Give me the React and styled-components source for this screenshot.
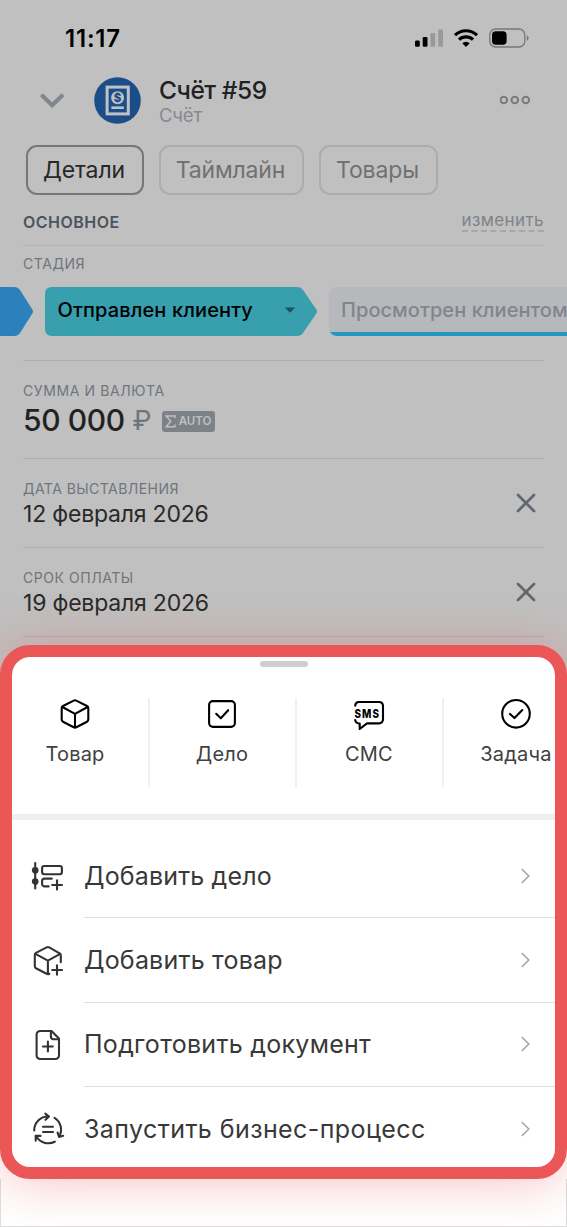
import styled, { createGlobalStyle } from "styled-components";

const App = () => {
    return (
        <Page>
            <GlobalStyle />
            <StatusBar>
                <Time>11:17</Time>
                <StatusIcons>
                    <SignalIcon />
                    <WifiIcon />
                    <BatteryIcon />
                </StatusIcons>
            </StatusBar>
            <Header>
                <ChevronDown />
                <InvoiceIcon />
                <Titles>
                    <Title>Счёт #59</Title>
                    <Subtitle>Счёт</Subtitle>
                </Titles>
                <DotsIcon />
            </Header>
            <Tabs>
                <Tab $width={118} $active>Детали</Tab>
                <Tab $width={145}>Таймлайн</Tab>
                <Tab $width={119}>Товары</Tab>
            </Tabs>
            <SectionHead>
                <SectionTitle>ОСНОВНОЕ</SectionTitle>
                <EditLink>изменить</EditLink>
            </SectionHead>
            <StageField>
                <Label $spacing={0.55}>СТАДИЯ</Label>
                <Stages>
                    <PreviousStage />
                    <CurrentStage>
                        Отправлен клиенту
                        <Caret />
                    </CurrentStage>
                    <NextStage>Просмотрен клиентом</NextStage>
                </Stages>
            </StageField>
            <Field $height={98}>
                <div>
                    <Label $spacing={0.6}>СУММА И ВАЛЮТА</Label>
                    <Money>
                        <Amount>50 000</Amount>
                        <Currency>₽</Currency>
                        <AutoBadge>
                            <Sigma />
                            AUTO
                        </AutoBadge>
                    </Money>
                </div>
            </Field>
            <Field $height={89}>
                <div>
                    <Label $spacing={0.45}>ДАТА ВЫСТАВЛЕНИЯ</Label>
                    <Value>12 февраля 2026</Value>
                </div>
                <CloseIcon />
            </Field>
            <Field $height={89}>
                <div>
                    <Label $spacing={0.55}>СРОК ОПЛАТЫ</Label>
                    <Value>19 февраля 2026</Value>
                </div>
                <CloseIcon />
            </Field>
            <LastLine />
            <Sheet>
                <Handle />
                <QuickActions>
                    <QuickAction><BoxIcon />Товар</QuickAction>
                    <QuickAction><CheckSquareIcon />Дело</QuickAction>
                    <QuickAction><SmsIcon />СМС</QuickAction>
                    <QuickAction><CheckCircleIcon />Задача</QuickAction>
                </QuickActions>
                <Menu>
                    <MenuItem icon={<TimelineIcon />} text="Добавить дело" spacing={0.15} />
                    <MenuItem icon={<BoxPlusIcon />} text="Добавить товар" spacing={0.2} />
                    <MenuItem icon={<FilePlusIcon />} text="Подготовить документ" spacing={0.28} />
                    <MenuItem icon={<ProcessIcon />} text="Запустить бизнес-процесс" spacing={0.42} />
                </Menu>
            </Sheet>
            <Footer />
        </Page>
    );
};

const MenuItem = ({ icon, text, spacing }) => (
    <MenuRow>
        <MenuIcon>{icon}</MenuIcon>
        <MenuText $spacing={spacing}>
            {text}
            <ChevronRight />
        </MenuText>
    </MenuRow>
);

/* ---- status bar and header icons ---- */

const SignalIcon = () => (
    <svg width="28" height="18" viewBox="0 0 28 18">
        <rect x="0" y="11.5" width="4.8" height="6.2" rx="1.3" />
        <rect x="7.7" y="8" width="4.8" height="9.7" rx="1.3" />
        <rect x="15.4" y="4" width="4.8" height="13.7" rx="1.3" fill="#999" />
        <rect x="23.2" y="0.4" width="4.8" height="17.3" rx="1.3" fill="#999" />
    </svg>
);

const WifiIcon = () => (
    <svg width="24" height="18" viewBox="0 0 24 18" fill="none" stroke="#000" strokeWidth="3.2">
        <path d="M1 6.2a15.8 15.8 0 0 1 22 0" />
        <path d="M5 10.7a10.1 10.1 0 0 1 14 0" />
        <path d="M12 17.9 8.3 14.3a5.3 5.3 0 0 1 7.4 0Z" fill="#000" stroke="none" />
    </svg>
);

const BatteryIcon = () => (
    <svg width="41" height="20" viewBox="0 0 41 20" fill="none">
        <rect x="0.8" y="1" width="35" height="18" rx="5.7" stroke="#777" strokeWidth="1.3" />
        <rect x="3" y="3.2" width="14.6" height="13.6" rx="3.7" fill="#000" />
        <path d="M37.8 7.2c2.4.9 2.4 4.7 0 5.6Z" fill="#777" />
    </svg>
);

const ChevronDown = () => (
    <svg width="26" height="16" viewBox="0 0 26 16" fill="none" stroke="#81858d" strokeWidth="4">
        <path d="m2.300 2.800 10.900 10.500L24 2.800" />
    </svg>
);

const InvoiceIcon = () => (
    <InvoiceSvg width="47" height="47" viewBox="0 0 47 47">
        <circle cx="23.5" cy="23.5" r="23.3" fill="#1b4e89" />
        <rect x="13.1" y="10.1" width="21.2" height="26.8" stroke="#bfc1c5" strokeWidth="3" fill="none" />
        <circle cx="23.6" cy="20.7" r="6.5" fill="#bfc1c5" />
        <text x="23.6" y="24.8" textAnchor="middle" fontSize="11.5" fontWeight="800" fill="#1b4e89">$</text>
        <path d="M17.4 30.7h12.4" stroke="#bfc1c5" strokeWidth="2.6" />
    </InvoiceSvg>
);

const DotsIcon = () => (
    <svg width="31" height="10" viewBox="0 0 31 10" fill="none" stroke="#777a7e" strokeWidth="2">
        <circle cx="3.8" cy="5" r="3.3" />
        <circle cx="14.8" cy="5" r="3.3" />
        <circle cx="25.8" cy="5" r="3.3" />
    </svg>
);

const Caret = () => (
    <svg width="12" height="6" viewBox="0 0 12 6">
        <path d="M.8.4h10.4L6 5.8Z" fill="#19525b" />
    </svg>
);

const Sigma = () => (
    <svg width="11" height="13" viewBox="0 0 11 13" fill="none" stroke="#bfc0c2" strokeWidth="1.4">
        <path d="M10 3.3V1H1.2l4.6 5.3-4.6 5.4H10V9.4" />
    </svg>
);

const CloseIcon = () => (
    <svg width="20" height="20" viewBox="0 0 20 20" stroke="#62676f" strokeWidth="2.8" strokeLinecap="round">
        <path d="m2 2 16 16M18 2 2 18" />
    </svg>
);

/* ---- sheet icons ---- */

const BoxIcon = () => (
    <LineIcon>
        <path d="M14.7 2.6a3 3 0 0 1 2.6 0L28 8a2.4 2.4 0 0 1 1.3 2.1v11.5a2.4 2.4 0 0 1-1.3 2.1l-10.7 5.5a3 3 0 0 1-2.6 0L4 23.7a2.4 2.4 0 0 1-1.3-2.1V10.1A2.4 2.4 0 0 1 4 8Z" />
        <path d="M3.4 9 16 15.8 28.6 9M16 15.8v13.6" />
    </LineIcon>
);

const CheckSquareIcon = () => (
    <LineIcon>
        <rect x="3.1" y="3.1" width="25.8" height="25.8" rx="3.8" />
        <path d="m10.2 15.8 4.6 4.5 7.4-8.1" />
    </LineIcon>
);

const SmsIcon = () => (
    <LineIcon>
        <path d="M2.2 7.6c.2-2 1.6-3.6 3.6-3.6h20.4a3.8 3.8 0 0 1 3.8 3.8v13.8a3.8 3.8 0 0 1-3.8 3.800H14L6.700 31v-5.400C4 25.400 2.400 24 2.200 22" />
        <text x="1.4" y="20" textLength="25.6" lengthAdjust="spacingAndGlyphs" letterSpacing="1.3" fontSize="12" fontWeight="800" fill="#000" stroke="none">SMS</text>
    </LineIcon>
);

const CheckCircleIcon = () => (
    <LineIcon>
        <circle cx="16" cy="15.8" r="13.8" />
        <path d="m10 15.9 4.5 4.2 7.8-8.1" />
    </LineIcon>
);

const TimelineIcon = () => (
    <LineIcon $color="#333">
        <path d="M3.2 3v25.5" />
        <circle cx="3.2" cy="10.3" r="2.3" fill="#333" />
        <circle cx="3.2" cy="21.5" r="2.3" fill="#333" />
        <rect x="10.1" y="6" width="19.8" height="8.2" rx="2.2" />
        <path d="M19.8 18.6h-7.2a2.5 2.5 0 0 0-2.5 2.5v2.8a2.5 2.5 0 0 0 2.5 2.5h4M25 20.4v9.2M20.2 25h9.8" />
    </LineIcon>
);

const BoxPlusIcon = () => (
    <LineIcon $color="#333">
        <path d="M28.8 17.2v-6.8a2.4 2.4 0 0 0-1.2-2.1L17.2 2.4a3 3 0 0 0-2.6 0L4 7.9a2.4 2.4 0 0 0-1.2 2.1v11.2A2.4 2.4 0 0 0 4 23.300l10.600 5.500a3 3 0 0 0 2.800 0" />
        <path d="M3.4 8.8 15.9 15.6 28.2 8.8M15.9 15.6v13.4M25 20.2v9.6M20.2 25h9.8" />
    </LineIcon>
);

const FilePlusIcon = () => (
    <LineIcon $color="#333">
        <path d="M19.5 2H8.2a3.6 3.6 0 0 0-3.6 3.6v20.8A3.6 3.6 0 0 0 8.2 30h15.2a3.6 3.6 0 0 0 3.6-3.6V9.6Z" />
        <path d="M18.9 2.3v5.3a2.6 2.6 0 0 0 2.6 2.6h5.3M15.9 12.6v9.8M11 17.5h9.8" />
    </LineIcon>
);

const ProcessIcon = () => (
    <LineIcon $color="#333">
        <path d="M2.2 17.4A13.8 13.8 0 0 1 16.8 3.6M13.3.6l3.700 3-3.500 3.200" />
        <path d="M22.500 4.900A13.800 13.800 0 0 1 27.200 23.600M25.600 19.600l1.400 4.300 4.200-1.200" />
        <path d="M22.800 28.700A13.800 13.800 0 0 1 4.200 22.900M3.800 27.600l-.2-4.800 4.900.1" />
        <path d="M11 13.800h10M11 19h10" />
    </LineIcon>
);

const ChevronRight = () => (
    <svg width="10" height="16" viewBox="0 0 10 16" fill="none" stroke="#a3a3a3" strokeWidth="1.5">
        <path d="m1.8 1 7 7-7 7" />
    </svg>
);

const GlobalStyle = createGlobalStyle`
    body{
        margin:0;
        font-family:Inter, "Liberation Sans", sans-serif;
    }
    *{
        box-sizing:border-box;
    }
    svg{
        flex:none;
        display:block;
    }
`;

const Page = styled.main`
    width:567px;
    height:1227px;
    overflow:hidden;
    display:flex;
    flex-direction:column;
    white-space:nowrap;
    background:linear-gradient(#c0c0c0 900px, #fff 900px); //dimmed screen on top, plain white under the sheet
`;

const StatusBar = styled.div`
    height:70px;
    flex:none;
    display:flex;
    justify-content:space-between;
    align-items:center;
    padding:5px 37px 0 65px;
`;

const Time = styled.span`
    padding-top:1px;
    font-size:24px;
    font-weight:600;
    letter-spacing:0.8px;
`;

const StatusIcons = styled.div`
    display:flex;
    align-items:center;
    gap:11px;
`;

const Header = styled.header`
    height:60px;
    flex:none;
    display:flex;
    align-items:center;
    padding:0 36px 0 39px;
`;

const InvoiceSvg = styled.svg`
    margin:0 18px 0 29px;
`;

const Titles = styled.div`
    flex:1;
    padding-top:3px;
`;

const Title = styled.h1`
    margin:0;
    font-size:24.5px;
    line-height:27px;
    font-weight:500;
    letter-spacing:-0.45px;
    color:#222;
`;

const Subtitle = styled.div`
    font-size:18.5px;
    line-height:22px;
    letter-spacing:-0.2px;
    color:#858a92;
`;

const Tabs = styled.nav`
    flex:none;
    display:flex;
    gap:15px;
    padding:15px 26px 0;
    height:64px;
`;

const Tab = styled.button`
    width:${(p) => p.$width}px;
    height:50px;
    padding:0 2px 0 0;
    border:2px solid ${(p) => (p.$active ? "#777" : "#acacac")};
    border-radius:11px;
    background:none;
    font:400 23px Inter, sans-serif;
    letter-spacing:-0.15px;
    color:${(p) => (p.$active ? "#272727" : "#717171")};
`;

const SectionHead = styled.div`
    height:52px;
    flex:none;
    display:flex;
    justify-content:space-between;
    align-items:flex-start;
    margin:0 23px;
    padding-top:16px;
    border-bottom:1px solid #b2b3b4;
`;

const SectionTitle = styled.h2`
    margin:0;
    font-size:16px;
    line-height:24px;
    font-weight:600;
    letter-spacing:0.5px;
    color:#4b535e;
`;

const EditLink = styled.a`
    font-size:17px;
    line-height:20px;
    letter-spacing:0.4px;
    color:#7e838a;
    border-bottom:2px dashed #a5a7aa;
`;

const StageField = styled.section`
    height:114px;
    flex:none;
    padding:8px 0 0 23px;
`;

const Label = styled.div`
    font-size:14px;
    line-height:20px;
    letter-spacing:${(p) => p.$spacing}px;
    color:#6f757d;
`;

const Stages = styled.div`
    display:flex;
    gap:12px;
    margin:13px 0 0 -23px;
    overflow:hidden;
`;

const Stage = styled.div`
    height:49px;
    flex:none;
    font-size:20px;
    line-height:46px;
    letter-spacing:0.12px;
`;

const PreviousStage = styled(Stage)`
    width:33px;
    background:#2c80bb;
    clip-path:path("M0 0h14q4 0 6 3L32 22q2 2.5 0 5L20 46q-2 3-6 3H0Z");
`;

const CurrentStage = styled(Stage)`
    width:272px;
    display:flex;
    align-items:center;
    justify-content:space-between;
    padding:0 21px 3px 12.5px;
    background:#389fae;
    font-weight:500;
    color:#000;
    clip-path:path("M7 0h245q4 0 6 3l13 19q2 2.5 0 5L258 46q-2 3-6 3H7q-7 0-7-7V7q0-7 7-7Z");
`;

const NextStage = styled(Stage)`
    width:238px;
    padding-left:12px;
    font-weight:500;
    letter-spacing:0.06px;
    color:#81858d;
    border-radius:8px 0 0 8px;
    background:linear-gradient(#b7b8bb 45px, #2298bf 45px);
`;

const Field = styled.section`
    height:${(p) => p.$height}px;
    flex:none;
    display:flex;
    align-items:flex-start;
    justify-content:space-between;
    margin:0 23px;
    padding-top:20px;
    border-top:1px solid #adaeb0;

    > svg{
        margin:14px 8px 0 0;
    }
`;

const LastLine = styled.div`
    height:10px;
    flex:none;
    margin:0 23px;
    border-top:1px solid #adaeb0;
`;

const Value = styled.div`
    font-size:23px;
    line-height:30px;
    letter-spacing:-0.2px;
    color:#292929;
`;

const Money = styled.div`
    display:flex;
    align-items:center;
    height:38px;
`;

const Amount = styled.span`
    font-size:30px;
    font-weight:500;
    letter-spacing:-0.4px;
    color:#222;
`;

const Currency = styled.span`
    margin-left:8px;
    font-size:27px;
    color:#6f757d;
`;

const AutoBadge = styled.span`
    height:21px;
    width:53px;
    margin:2px 0 0 10px;
    display:flex;
    align-items:center;
    justify-content:center;
    gap:3px;
    border-radius:3px;
    background:#7d8289;
    color:#bfc0c2;
    font-size:11.5px;
    font-weight:600;
`;

const Sheet = styled.section`
    height:534px;
    flex:none;
    margin-top:-1px;
    display:flex;
    flex-direction:column;
    border:12px solid #eb5757;
    border-radius:30px;
    background:#fff padding-box;
    box-shadow:0 3px 52px rgba(235, 87, 87, 0.36);
    overflow:hidden;
    position:relative;
`;

const Footer = styled.div`
    flex:1;
    border:1px solid #dedede;
    border-top:0;
`;

const Handle = styled.div`
    width:48px;
    height:6px;
    flex:none;
    margin:4px auto 0;
    border-radius:3px;
    background:#cfcfcf;
`;

const QuickActions = styled.div`
    display:flex;
    flex:none;
    height:153px;
    margin-left:-9px;
    padding-top:31px;
    border-bottom:6px solid #efefef;
`;

const QuickAction = styled.div`
    width:147px;
    height:89px;
    flex:none;
    display:flex;
    flex-direction:column;
    align-items:center;
    gap:12px;
    padding-right:1px;
    border-right:2px solid #f0f0f0;
    font-size:20px;
    line-height:24px;
    letter-spacing:0.2px;
    color:#404040;
`;

const LineIcon = styled.svg.attrs({ width: 32, height: 32, viewBox: "0 0 32 32" })`
    overflow:visible;
    fill:none;
    stroke:${(p) => p.$color || "#000"};
    stroke-width:2.1;
    stroke-linecap:round;
    stroke-linejoin:round;
`;

const Menu = styled.div`
    padding-top:14px;
`;

const MenuRow = styled.div`
    display:flex;
    height:84.4px;
`;

const MenuIcon = styled.div`
    width:72px;
    display:flex;
    align-items:center;
    padding-left:20px;
`;

const MenuText = styled.div`
    flex:1;
    display:flex;
    align-items:center;
    justify-content:space-between;
    padding-right:25px;
    border-bottom:1.5px solid #dedede;
    font-size:25px;
    letter-spacing:${(p) => p.$spacing}px;
    color:#383838;
`;

export default App;
